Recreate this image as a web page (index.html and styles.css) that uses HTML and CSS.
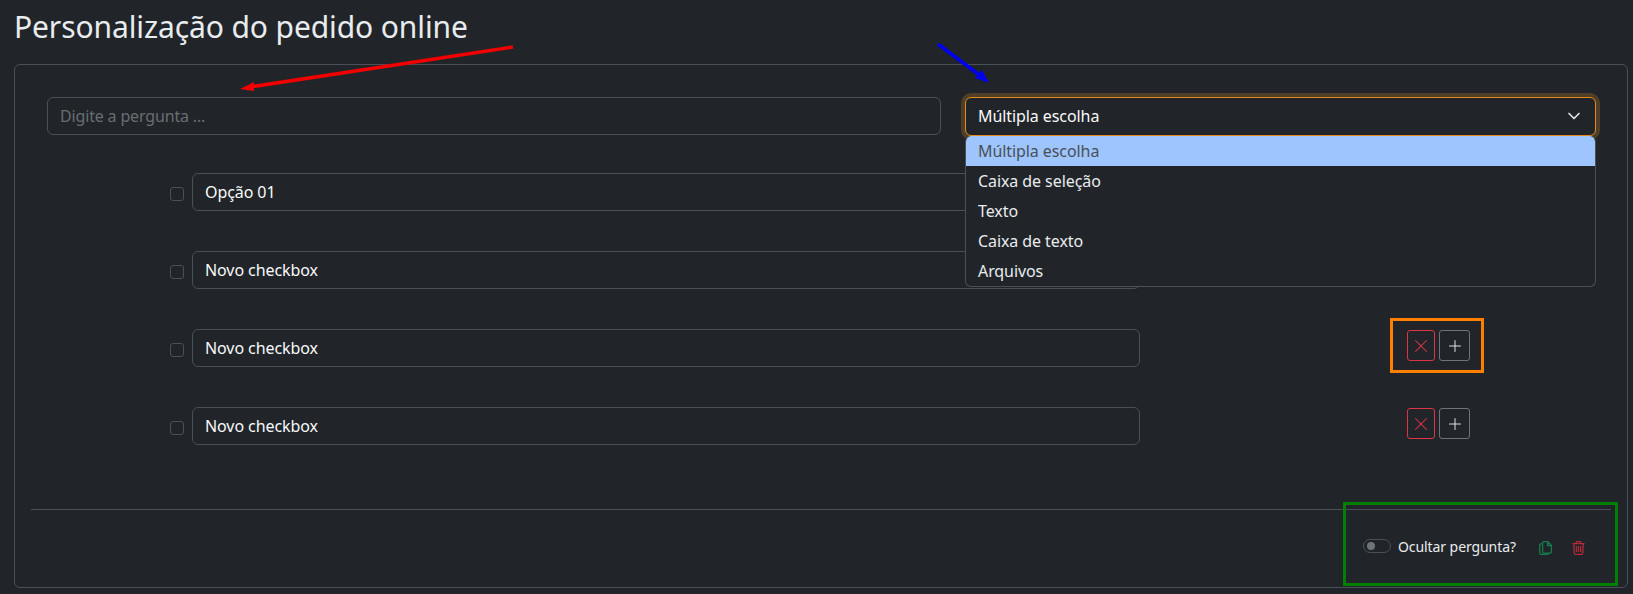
FILE: index.html
```html
<!DOCTYPE html>
<html lang="pt-BR">
<head>
<meta charset="utf-8">
<title>Personalização do pedido online</title>
<link rel="stylesheet" href="styles.css">
</head>
<body>
<h1 class="title">Personalização do pedido online</h1>
<section class="card">
  <div class="question">
    <div class="field field-question placeholder">Digite a pergunta ...</div>
    <div class="select-wrap">
      <div class="field select-box">
        <span>Múltipla escolha</span>
        <svg class="chevron" viewBox="0 0 16 16"><path fill="none" stroke="currentColor" stroke-linecap="round" stroke-linejoin="round" stroke-width="1.7" d="m3 5.500 5 5 5-5"/></svg>
      </div>
      <ul class="menu">
        <li class="menu-item active">Múltipla escolha</li>
        <li class="menu-item">Caixa de seleção</li>
        <li class="menu-item">Texto</li>
        <li class="menu-item">Caixa de texto</li>
        <li class="menu-item">Arquivos</li>
      </ul>
    </div>
  </div>
  <div class="options">
    <div class="option">
      <span class="check"></span>
      <div class="field field-option">Opção 01</div>
      <div class="actions">
        <button class="btn btn-red"><svg viewBox="0 0 16 16"><path d="M2.146 2.854a.5.5 0 1 1 .708-.708L8 7.293l5.146-5.147a.5.5 0 0 1 .708.708L8.707 8l5.147 5.146a.5.5 0 0 1-.708.708L8 8.707l-5.146 5.147a.5.5 0 0 1-.708-.708L7.293 8 2.146 2.854Z"/></svg></button>
        <button class="btn btn-grey"><svg viewBox="0 0 16 16"><path d="M8 2a.5.5 0 0 1 .5.5v5h5a.5.5 0 0 1 0 1h-5v5a.5.5 0 0 1-1 0v-5h-5a.5.5 0 0 1 0-1h5v-5A.5.5 0 0 1 8 2Z"/></svg></button>
      </div>
    </div>
    <div class="option">
      <span class="check"></span>
      <div class="field field-option">Novo checkbox</div>
      <div class="actions">
        <button class="btn btn-red"><svg viewBox="0 0 16 16"><path d="M2.146 2.854a.5.5 0 1 1 .708-.708L8 7.293l5.146-5.147a.5.5 0 0 1 .708.708L8.707 8l5.147 5.146a.5.5 0 0 1-.708.708L8 8.707l-5.146 5.147a.5.5 0 0 1-.708-.708L7.293 8 2.146 2.854Z"/></svg></button>
        <button class="btn btn-grey"><svg viewBox="0 0 16 16"><path d="M8 2a.5.5 0 0 1 .5.5v5h5a.5.5 0 0 1 0 1h-5v5a.5.5 0 0 1-1 0v-5h-5a.5.5 0 0 1 0-1h5v-5A.5.5 0 0 1 8 2Z"/></svg></button>
      </div>
    </div>
    <div class="option">
      <span class="check"></span>
      <div class="field field-option">Novo checkbox</div>
      <div class="actions">
        <button class="btn btn-red"><svg viewBox="0 0 16 16"><path d="M2.146 2.854a.5.5 0 1 1 .708-.708L8 7.293l5.146-5.147a.5.5 0 0 1 .708.708L8.707 8l5.147 5.146a.5.5 0 0 1-.708.708L8 8.707l-5.146 5.147a.5.5 0 0 1-.708-.708L7.293 8 2.146 2.854Z"/></svg></button>
        <button class="btn btn-grey"><svg viewBox="0 0 16 16"><path d="M8 2a.5.5 0 0 1 .5.5v5h5a.5.5 0 0 1 0 1h-5v5a.5.5 0 0 1-1 0v-5h-5a.5.5 0 0 1 0-1h5v-5A.5.5 0 0 1 8 2Z"/></svg></button>
      </div>
    </div>
    <div class="option">
      <span class="check"></span>
      <div class="field field-option">Novo checkbox</div>
      <div class="actions">
        <button class="btn btn-red"><svg viewBox="0 0 16 16"><path d="M2.146 2.854a.5.5 0 1 1 .708-.708L8 7.293l5.146-5.147a.5.5 0 0 1 .708.708L8.707 8l5.147 5.146a.5.5 0 0 1-.708.708L8 8.707l-5.146 5.147a.5.5 0 0 1-.708-.708L7.293 8 2.146 2.854Z"/></svg></button>
        <button class="btn btn-grey"><svg viewBox="0 0 16 16"><path d="M8 2a.5.5 0 0 1 .5.5v5h5a.5.5 0 0 1 0 1h-5v5a.5.5 0 0 1-1 0v-5h-5a.5.5 0 0 1 0-1h5v-5A.5.5 0 0 1 8 2Z"/></svg></button>
      </div>
    </div>
  </div>
  <hr class="divider">
  <div class="footer">
    <span class="toggle"><span class="knob"></span></span>
    <span class="toggle-label">Ocultar pergunta?</span>
    <svg class="icon icon-copy" viewBox="0 0 13 14"><path d="M3.6 11V1.9q0-1.2 1.2-1.2h4L12.4 4.300v6.700q0 1.200-1.200 1.200H4.800q-1.200 0-1.200-1.200ZM8.600.7v3.800h3.800"/><path d="M3.600 2.800H2q-1.300 0-1.300 1.300v8q0 1.300 1.300 1.300h6.400q1.300 0 1.300-1.300v-.5"/></svg>
    <svg class="icon icon-trash" viewBox="0 0 13 14"><path d="M.5 2.700h12M4.200 2.700V1.500q0-.8.8-.8h3q.8 0 .8.8v1.200M1.700 2.700l.6 9.600q.1 1 1.100 1h6.200q1 0 1.100-1l.6-9.600"/><path d="M4.400 5v6M6.500 5v6M8.600 5v6" class="trash-bars"/></svg>
  </div>
</section>

<svg class="annotations" viewBox="0 0 1633 594">
  <line x1="513" y1="47" x2="250" y2="87" stroke="#f00000" stroke-width="3.500"/>
  <polygon points="240,89 254,82 254,91" fill="#f00000"/>
  <line x1="938" y1="44" x2="982" y2="77" stroke="#0000f0" stroke-width="3.500"/>
  <polygon points="989,83 975,78 982,70" fill="#0000f0"/>
</svg>
<div class="mark mark-orange"></div>
<div class="mark mark-green"></div>
</body>
</html>
```
FILE: styles.css
```css
* { box-sizing: border-box; }
html, body { height: 100%; }
body {
  margin: 0;
  padding: 0 5px 0 14px;
  background: #212529;
  color: #dee2e6;
  font-family: "Noto Sans", sans-serif;
  font-size: 16px;
  letter-spacing: -.08px;
  overflow: hidden;
  position: relative;
}
.title {
  margin: 0;
  height: 64px;
  padding-top: 7px;
  font-size: 30px;
  font-weight: 400;
  line-height: 40px;
  letter-spacing: -.1px;
  color: #e9ecef;
}
.card {
  height: 524px;
  padding: 32px 16px 0;
  border: 1px solid #495057;
  border-radius: 6px;
}
.question {
  display: flex;
  gap: 24px;
  padding-left: 16px;
}
.field {
  height: 38px;
  padding: 0 12px;
  border: 1px solid #495057;
  border-radius: 6px;
  line-height: 36px;
  color: #f8f9fa;
  background: #212529;
}
.field-question { flex: none; width: 894px; }
.placeholder { color: #686e74; letter-spacing: -.16px; }
.select-wrap { flex: none; position: relative; width: 631px; }
.select-box {
  display: flex;
  align-items: center;
  justify-content: space-between;
  height: 39px;
  padding-bottom: 1px;
  border-color: #e08a20;
  box-shadow: 0 0 0 4px rgba(224, 138, 32, .25);
}
.chevron { width: 16px; height: 16px; color: #dee2e6; margin-right: 1px; }
.menu {
  position: absolute;
  top: 39px;
  left: 0;
  right: 0;
  z-index: 2;
  margin: 0;
  padding: 0;
  list-style: none;
  background: #212529;
  border: 1px solid #495057;
  border-top: 0;
  border-radius: 6px;
  overflow: hidden;
}
.menu-item {
  height: 30px;
  padding: 0 12px;
  line-height: 30px;
  color: #e9ecef;
}
.menu-item.active { background: #9ec5fe; color: #495057; }
.options {
  display: flex;
  flex-direction: column;
  gap: 40px;
  margin-top: 37px;
  padding-left: 139px;
}
.option { display: flex; align-items: flex-start; }
.check {
  width: 14px;
  height: 14px;
  margin: 14px 8px 0 0;
  border: 1px solid #495057;
  border-radius: 3px;
}
.field-option { width: 948px; }
.actions { display: flex; gap: 4px; margin: 1px 0 0 267px; }
.btn {
  display: flex;
  align-items: center;
  justify-content: center;
  height: 31px;
  padding: 0;
  background: transparent;
  border: 1px solid;
  border-radius: 3px;
}
.btn svg { width: 16px; height: 16px; fill: currentColor; }
.btn-red { width: 28px; color: #dc3545; }
.btn-grey { width: 31px; color: #adb5bd; border-color: #6c757d; }
.btn-grey svg { fill: #dee2e6; }
.divider {
  height: 1px;
  margin: 64px 0 0;
  border: 0;
  background: #495057;
}
.footer {
  display: flex;
  align-items: center;
  height: 30px;
  margin-top: 21px;
  padding-left: 1332px;
}
.toggle {
  width: 28px;
  height: 14px;
  padding: 2px 3px;
  border: 1px solid #495057;
  border-radius: 7px;
}
.knob { display: block; width: 8px; height: 8px; border-radius: 50%; background: #6c757d; }
.toggle-label { margin-left: 7px; font-size: 14px; color: #e9ecef; white-space: nowrap; }
.icon { width: 13px; height: 14px; flex: none; fill: none; stroke-width: 1.3; margin-top: 4px; }
.icon-copy { margin-left: 23px; stroke: #167a4c; }
.icon-trash { margin-left: 20px; stroke: #b52a38; }
.trash-bars { stroke-width: 1.2; }
.annotations {
  position: absolute;
  left: 0;
  top: 0;
  width: 1633px;
  height: 594px;
  z-index: 3;
  pointer-events: none;
}
.mark { position: absolute; z-index: 3; border-style: solid; }
.mark-orange { left: 1390px; top: 318px; width: 94px; height: 55px; border-width: 3px; border-color: #ff8000; }
.mark-green { left: 1343px; top: 502px; width: 275px; height: 84px; border-width: 3px; border-color: #008000; }
```
